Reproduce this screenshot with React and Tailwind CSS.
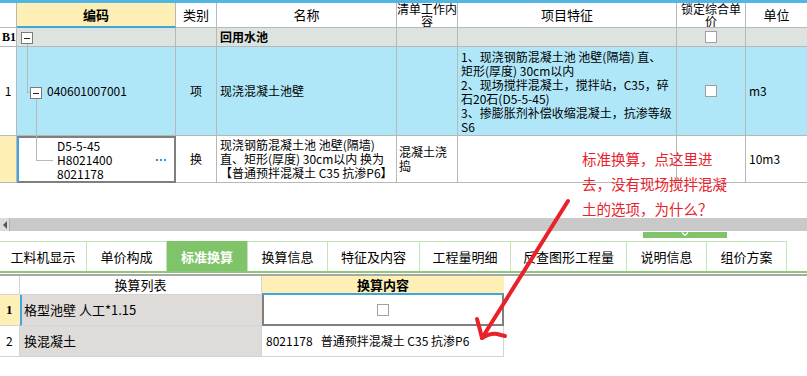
import React from 'react';

const line = 'border-[#b8b8b8]';

function Check() {
  return <div className="w-[12px] h-[12px] bg-white border border-[#a0a0a0]"></div>;
}

function MinusBox({ className }) {
  return (
    <div className={`absolute w-[12px] h-[12px] bg-white border border-[#7a7a7a] flex items-center justify-center ${className}`}>
      <div className="w-[6px] h-[1px] bg-[#222]"></div>
    </div>
  );
}

const tabs = [
  { label: '工料机显示', w: 'w-[87px]' },
  { label: '单价构成', w: 'w-[80px]' },
  { label: '标准换算', w: 'w-[81px]', active: true },
  { label: '换算信息', w: 'w-[80px]' },
  { label: '特征及内容', w: 'w-[92px]' },
  { label: '工程量明细', w: 'w-[91px]' },
  { label: '反查图形工程量', w: 'w-[116px]' },
  { label: '说明信息', w: 'w-[80px]' },
  { label: '组价方案', w: 'w-[80px]' },
];

export default function App() {
  return (
    <div className="relative w-[807px] h-[376px] overflow-hidden bg-white text-black font-['Noto_Sans_CJK_SC',sans-serif] text-[12px] leading-[14px]">
      <div className="h-[3px] bg-[#53b5e3]"></div>

      {/* 清单表格 */}
      <div className="relative grid grid-cols-[17px_159px_41px_180px_61px_219px_69px_61px] grid-rows-[25px_19px_89px_47px]">
        {/* 表头 */}
        <div className={`border-r border-b ${line}`}></div>
        <div className={`border-r ${line} border-b-2 border-b-[#3ea6d8] bg-[#fdefb6] flex items-center justify-center font-bold text-[13px]`}>编码</div>
        <div className={`border-r border-b ${line} flex items-center justify-center text-[13px]`}>类别</div>
        <div className={`border-r border-b ${line} flex items-center justify-center text-[13px]`}>名称</div>
        <div className={`border-r border-b ${line} flex flex-col items-center justify-center overflow-hidden text-[12px] leading-[12px] text-center whitespace-nowrap`}>
          <span>清单工作内</span>
          <span>容</span>
        </div>
        <div className={`border-r border-b ${line} flex items-center justify-center text-[13px]`}>项目特征</div>
        <div className={`border-r border-b ${line} flex flex-col items-center justify-center overflow-hidden text-[12px] leading-[12px] text-center whitespace-nowrap`}>
          <span>锁定综合单</span>
          <span>价</span>
        </div>
        <div className={`border-b ${line} flex items-center justify-center text-[13px]`}>单位</div>

        {/* B1 */}
        <div className={`border-r border-b ${line} flex items-center justify-end overflow-hidden font-bold font-['Liberation_Serif',serif] text-[12px]`}>B1</div>
        <div className={`border-r border-b ${line} bg-[#dde4e0]`}></div>
        <div className={`border-r border-b ${line} bg-[#dde4e0]`}></div>
        <div className={`border-r border-b ${line} bg-[#dde4e0] flex items-center pl-[3px] font-bold`}>回用水池</div>
        <div className={`border-r border-b ${line} bg-[#dde4e0]`}></div>
        <div className={`border-r border-b ${line} bg-[#dde4e0]`}></div>
        <div className={`border-r border-b ${line} bg-[#dde4e0] flex items-center justify-center`}><Check /></div>
        <div className={`border-b ${line} bg-[#dde4e0]`}></div>

        {/* 行 1 */}
        <div className={`border-r border-b ${line} flex items-center justify-center`}>1</div>
        <div className={`border-r border-b ${line} bg-[#afe7f9] flex items-center pl-[30px]`}>040601007001</div>
        <div className={`border-r border-b ${line} bg-[#afe7f9] flex items-center justify-center`}>项</div>
        <div className={`border-r border-b ${line} bg-[#afe7f9] flex items-center pl-[3px]`}>现浇混凝土池壁</div>
        <div className={`border-r border-b ${line} bg-[#afe7f9]`}></div>
        <div className={`border-r border-b ${line} bg-[#afe7f9] pl-[3px] pt-[3px] whitespace-nowrap`}>
          <div>1、现浇钢筋混凝土池 池壁(隔墙) 直、</div>
          <div>矩形(厚度) 30cm以内</div>
          <div>2、现场搅拌混凝土，搅拌站，C35，碎</div>
          <div>石20石(D5-5-45)</div>
          <div>3、掺膨胀剂补偿收缩混凝土，抗渗等级</div>
          <div>S6</div>
        </div>
        <div className={`border-r border-b ${line} bg-[#afe7f9] flex items-center justify-center`}><Check /></div>
        <div className={`border-b ${line} bg-[#afe7f9] flex items-center pl-[3px]`}>m3</div>

        {/* 行 2 */}
        <div className={`border-r border-b ${line} bg-[#fdefb6]`}></div>
        <div className="border-2 border-[#7f7f7f] border-l-[#3ea6d8] flex items-center justify-between pl-[38px] pr-[8px]">
          <div>
            <div>D5-5-45</div>
            <div>H8021400</div>
            <div>8021178</div>
          </div>
          <div className="flex gap-[2px]">
            <div className="w-[2px] h-[2px] bg-[#3a8fd6]"></div>
            <div className="w-[2px] h-[2px] bg-[#3a8fd6]"></div>
            <div className="w-[2px] h-[2px] bg-[#3a8fd6]"></div>
          </div>
        </div>
        <div className={`border-r border-b ${line} flex items-center justify-center`}>换</div>
        <div className={`border-r border-b ${line} flex flex-col justify-center pl-[3px] whitespace-nowrap`}>
          <div>现浇钢筋混凝土池 池壁(隔墙)</div>
          <div>直、矩形(厚度) 30cm以内  换为</div>
          <div>【普通预拌混凝土 C35 抗渗P6】</div>
        </div>
        <div className={`border-r border-b ${line} flex flex-col justify-center pl-[2px] whitespace-nowrap`}>
          <div>混凝土浇</div>
          <div>捣</div>
        </div>
        <div className={`border-r border-b ${line}`}></div>
        <div className={`border-r border-b ${line}`}></div>
        <div className={`border-b ${line} flex items-center pl-[3px]`}>10m3</div>

        {/* 树形连线 */}
        <MinusBox className="left-[21px] top-[29px]" />
        <div className="absolute left-[27px] top-[41px] w-[1px] h-[48px] bg-[#b8b8b8]"></div>
        <div className="absolute left-[27px] top-[89px] w-[4px] h-[1px] bg-[#b8b8b8]"></div>
        <MinusBox className="left-[30px] top-[84px]" />
        <div className="absolute left-[36px] top-[96px] w-[1px] h-[61px] bg-[#b8b8b8]"></div>
        <div className="absolute left-[36px] top-[157px] w-[17px] h-[1px] bg-[#b8b8b8]"></div>
      </div>

      <div className="h-[35px]"></div>

      {/* 滚动条 */}
      <div className="h-[13px] flex bg-[#c9c9c9]">
        <div className="w-[10px] bg-[#dcdcdc] border-r border-[#b0b0b0] flex items-center justify-center">
          <div className="w-0 h-0 border-y-[4px] border-y-transparent border-r-[4px] border-r-[#555]"></div>
        </div>
      </div>

      <div className="h-[10px] pt-[1px] pl-[643px]">
        <div className="w-[84px] h-[6px] bg-[#80c46a] flex justify-center">
          <svg width="10" height="5" viewBox="0 0 10 5">
            <path d="M2 0.5 L5 3.5 L8 0.5" stroke="#fff" strokeWidth="1.2" fill="none" />
          </svg>
        </div>
      </div>

      {/* 标签页 */}
      <div className="h-[30px] flex">
        {tabs.map((t) => (
          <div
            key={t.label}
            className={`${t.w} h-full flex items-center justify-center text-[13px] border-t border-r border-[#c4e3b6] ${t.active ? 'bg-[#80c46a] text-white font-bold border-t-[#80c46a]' : ''}`}
          >
            {t.label}
          </div>
        ))}
      </div>
      <div className="h-[2px] bg-[#8dc77a]"></div>
      <div className="h-[1px]"></div>
      <div className="h-[2px] bg-[#a8a8a8]"></div>

      {/* 换算表 */}
      <div className="grid grid-cols-[20px_242px_242px] grid-rows-[19px_31px_31px] w-[504px]">
        <div className="border-r border-b border-[#d4d4d4]"></div>
        <div className="border-r border-b border-[#d4d4d4] flex items-center justify-center text-[13px]">换算列表</div>
        <div className="bg-[#fdefb6] border-b-2 border-[#3ea6d8] flex items-center justify-center font-bold text-[13px]">换算内容</div>

        <div className="bg-[#fdefb6] border-b border-[#d4d4d4] flex items-center pl-[6px] font-bold font-['Liberation_Serif',serif] text-[13px]">1</div>
        <div className="bg-[#dfdbd8] border-l-2 border-l-[#3ea6d8] border-b border-b-[#d4d4d4] flex items-center pl-[2px] text-[13px]">格型池壁 人工*1.15</div>
        <div className="border-x-2 border-b-2 border-[#7f7f7f] flex items-center justify-center"><Check /></div>

        <div className="border-r border-b border-[#d4d4d4] flex items-center pl-[6px]">2</div>
        <div className="bg-[#dfdbd8] border-r border-b border-[#d4d4d4] flex items-center pl-[4px] text-[13px]">换混凝土</div>
        <div className="border-r border-b border-[#d4d4d4] flex items-center pl-[4px] whitespace-pre">8021178   普通预拌混凝土 C35 抗渗P6</div>
      </div>

      {/* 红色批注 */}
      <div className="absolute left-[582px] top-[146px] text-[#e8212b] text-[14.5px] leading-[25px] whitespace-nowrap">
        <div>标准换算，点这里进</div>
        <div>去，没有现场搅拌混凝</div>
        <div>土的选项，为什么？</div>
      </div>
      <svg className="absolute left-0 top-0 pointer-events-none" width="807" height="376" viewBox="0 0 807 376">
        <g stroke="#e8212b" strokeWidth="4" fill="none" strokeLinecap="round" strokeLinejoin="round">
          <path d="M568 201 L482 338" />
          <path d="M477 319 L480 330 L482 338 Q490 333 497 334 L505 336" />
        </g>
      </svg>
    </div>
  );
}
